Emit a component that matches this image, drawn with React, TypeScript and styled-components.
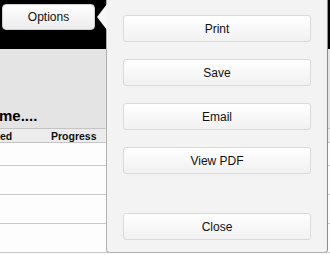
import styled, { createGlobalStyle } from "styled-components";

const GlobalStyle = createGlobalStyle`
  html, body {
    margin: 0;
    padding: 0;
    background: #ffffff;
    font-family: "Liberation Sans", Arial, sans-serif;
  }
`;

const menuItems = ["Print", "Save", "Email", "View PDF"];
const rowHeights = [22, 28, 28, 28];

const App = () => {
  return (
    <>
      <GlobalStyle />
      <Page>
        <TopBar>
          <OptionsButton>Options</OptionsButton>
        </TopBar>
        <TitleArea>
          <Title>me....</Title>
        </TitleArea>
        <Table>
          <HeadRow>
            <HeadCell $width={51}>ed</HeadCell>
            <HeadCell $width={60}>Progress</HeadCell>
          </HeadRow>
          {rowHeights.map((h, i) => (
            <Row key={i} $height={h} />
          ))}
        </Table>

        <Popover>
          <Arrow />
          <MenuList>
            {menuItems.map((label) => (
              <MenuButton key={label}>{label}</MenuButton>
            ))}
            <MenuButton $spaced>Close</MenuButton>
          </MenuList>
        </Popover>
      </Page>
    </>
  );
};

export default App;

const Page = styled.div`
  position: relative;
  width: 330px;
  height: 255px;
  overflow: hidden;
  background: #fdfdfd;
`;

const TopBar = styled.div`
  height: 49px;
  background: #000;
  padding: 4px 0 0 2px;
  box-sizing: border-box;
`;

const OptionsButton = styled.button`
  width: 93px;
  height: 26px;
  border: 1px solid #d0d0d0;
  border-radius: 4px;
  background: linear-gradient(#ffffff, #ececec);
  font-family: "Liberation Sans", Arial, sans-serif;
  font-size: 12px;
  color: #111;
  padding: 0;
`;

const TitleArea = styled.div`
  height: 79px;
  background: #e4e4e4;
  display: flex;
  align-items: flex-end;
  padding-bottom: 4px;
  box-sizing: border-box;
`;

const Title = styled.div`
  font-size: 15px;
  font-weight: bold;
  color: #000;
  margin-left: -1px;
  line-height: 16px;
`;

const Table = styled.div`
  display: flex;
  flex-direction: column;
`;

const HeadRow = styled.div`
  display: flex;
  height: 13px;
  background: #ececec;
  border-top: 1px solid #c4c4c4;
  border-bottom: 1px solid #c4c4c4;
  align-items: center;
`;

const HeadCell = styled.div<{ $width: number }>`
  width: ${(p) => p.$width}px;
  font-size: 10.5px;
  font-weight: bold;
  color: #111;
  line-height: 12px;
`;

const Row = styled.div<{ $height: number }>`
  height: ${(p) => p.$height}px;
  border-bottom: 1px solid #c8c8c8;
  background: #fdfdfd;
`;

const Popover = styled.div`
  position: absolute;
  left: 106px;
  top: -1px;
  width: 222px;
  height: 254px;
  box-sizing: border-box;
  background: #f3f3f3;
  border: 1px solid #b0b0b0;
  border-right-color: #8c8c8c;
  border-radius: 0 0 4px 4px;
`;

const Arrow = styled.div`
  position: absolute;
  left: -10px;
  top: 4px;
  width: 0;
  height: 0;
  border-top: 13px solid transparent;
  border-bottom: 13px solid transparent;
  border-right: 10px solid #f6f6f6;
`;

const MenuList = styled.div`
  display: flex;
  flex-direction: column;
  gap: 17px;
  padding: 15px 16px 0 16px;
`;

const MenuButton = styled.button<{ $spaced?: boolean }>`
  height: 27px;
  width: 100%;
  margin-top: ${(p) => (p.$spaced ? "22px" : "0")};
  border: 1px solid #dadada;
  border-radius: 3px;
  background: linear-gradient(#ffffff, #f1f1f1);
  font-family: "Liberation Sans", Arial, sans-serif;
  font-size: 12px;
  color: #111;
  padding: 0;
`;
